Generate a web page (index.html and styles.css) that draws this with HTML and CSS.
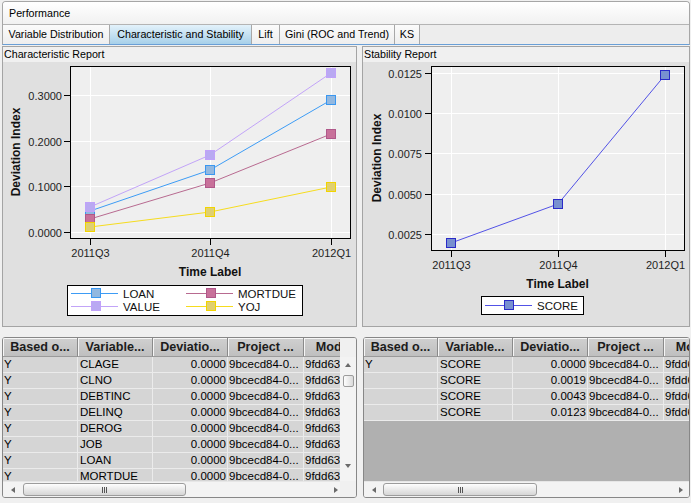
FILE: index.html
```html
<!DOCTYPE html>
<html>
<head>
<meta charset="utf-8">
<link rel="stylesheet" href="styles.css">
</head>
<body>
<div class="head">
  <div class="titlebar">Performance</div>
  <div class="tabs">
    <div class="tab t1">Variable Distribution</div>
    <div class="tab t2 active">Characteristic and Stability</div>
    <div class="tab t3">Lift</div>
    <div class="tab t4">Gini (ROC and Trend)</div>
    <div class="tab t5">KS</div>
  </div>
</div>
<div class="content">
  <div class="charts">
    <div class="panel pl">
      <div class="panel-title">Characteristic Report</div>
      <svg class="chart" width="353" height="264" viewBox="3 62 353 264">
        <rect x="3" y="62" width="353" height="264" fill="#e0e0e0"/>
        <rect x="70.5" y="66.5" width="280" height="172" fill="#efefef"/>
        <g stroke="#ffffff" stroke-width="1">
          <line x1="90.5" y1="67" x2="90.5" y2="238"/>
          <line x1="210.5" y1="67" x2="210.5" y2="238"/>
          <line x1="331.5" y1="67" x2="331.5" y2="238"/>
          <line x1="71" y1="95.5" x2="350" y2="95.5"/>
          <line x1="71" y1="141.5" x2="350" y2="141.5"/>
          <line x1="71" y1="186.5" x2="350" y2="186.5"/>
          <line x1="71" y1="232.5" x2="350" y2="232.5"/>
        </g>
        <rect x="70.5" y="66.5" width="280" height="172" fill="none" stroke="#000"/>
        <g stroke="#000">
          <line x1="64" y1="95.5" x2="70" y2="95.5"/>
          <line x1="64" y1="141.5" x2="70" y2="141.5"/>
          <line x1="64" y1="186.5" x2="70" y2="186.5"/>
          <line x1="64" y1="232.5" x2="70" y2="232.5"/>
          <line x1="90.5" y1="239" x2="90.5" y2="245"/>
          <line x1="210.5" y1="239" x2="210.5" y2="245"/>
          <line x1="331.5" y1="239" x2="331.5" y2="245"/>
        </g>
        <g class="tick" text-anchor="end">
          <text x="62" y="99.5">0.3000</text>
          <text x="62" y="145.5">0.2000</text>
          <text x="62" y="190.5">0.1000</text>
          <text x="62" y="236.5">0.0000</text>
        </g>
        <g class="tick" text-anchor="middle">
          <text x="90.5" y="257">2011Q3</text>
          <text x="210.5" y="257">2011Q4</text>
          <text x="331.5" y="257">2012Q1</text>
        </g>
        <text class="axis" x="210" y="276" text-anchor="middle">Time Label</text>
        <text class="axis" transform="translate(20 152) rotate(-90)" text-anchor="middle">Deviation Index</text>

        <polyline points="90,211 210,170 331,100" fill="none" stroke="#3d9cf5"/>
        <rect x="85.5" y="206.5" width="9" height="9" fill="#92b8e0" stroke="#3a97f0"/>
        <rect x="205.5" y="165.5" width="9" height="9" fill="#92b8e0" stroke="#3a97f0"/>
        <rect x="326.5" y="95.5" width="9" height="9" fill="#92b8e0" stroke="#3a97f0"/>

        <polyline points="90,219 210,183 331,134" fill="none" stroke="#b86a90"/>
        <rect x="85.5" y="214.5" width="9" height="9" fill="#c8719a" stroke="#b0588a"/>
        <rect x="205.5" y="178.5" width="9" height="9" fill="#c8719a" stroke="#b0588a"/>
        <rect x="326.5" y="129.5" width="9" height="9" fill="#c8719a" stroke="#b0588a"/>

        <polyline points="90,207 210,155 331,73" fill="none" stroke="#c2a4f8"/>
        <rect x="85.5" y="202.5" width="9" height="9" fill="#b9a9f2" stroke="#c0a2fa"/>
        <rect x="205.5" y="150.5" width="9" height="9" fill="#b9a9f2" stroke="#c0a2fa"/>
        <rect x="326.5" y="68.5" width="9" height="9" fill="#b9a9f2" stroke="#c0a2fa"/>

        <polyline points="90,227 210,212 331,187" fill="none" stroke="#f6dc1e"/>
        <rect x="85.5" y="222.5" width="9" height="9" fill="#e0d070" stroke="#f2d400"/>
        <rect x="205.5" y="207.5" width="9" height="9" fill="#e0d070" stroke="#f2d400"/>
        <rect x="326.5" y="182.5" width="9" height="9" fill="#e0d070" stroke="#f2d400"/>

        <rect x="67.5" y="285.5" width="235" height="30" fill="#fff" stroke="#000"/>
        <line x1="71" y1="293.5" x2="118" y2="293.5" stroke="#3d9cf5"/>
        <rect x="91.5" y="288.5" width="9" height="9" fill="#92b8e0" stroke="#3a97f0"/>
        <line x1="186" y1="293.5" x2="233" y2="293.5" stroke="#b86a90"/>
        <rect x="206.5" y="288.5" width="9" height="9" fill="#c8719a" stroke="#b0588a"/>
        <line x1="71" y1="306.5" x2="118" y2="306.5" stroke="#c2a4f8"/>
        <rect x="91.5" y="301.5" width="9" height="9" fill="#b9a9f2" stroke="#c0a2fa"/>
        <line x1="186" y1="306.5" x2="233" y2="306.5" stroke="#f6dc1e"/>
        <rect x="206.5" y="301.5" width="9" height="9" fill="#e0d070" stroke="#f2d400"/>
        <g class="leg">
          <text x="123" y="297.5">LOAN</text>
          <text x="238" y="297.5">MORTDUE</text>
          <text x="123" y="310.5">VALUE</text>
          <text x="238" y="310.5">YOJ</text>
        </g>
      </svg>
    </div>
    <div class="panel pr">
      <div class="panel-title">Stability Report</div>
      <svg class="chart" width="326" height="264" viewBox="363 62 326 264">
        <rect x="363" y="62" width="326" height="264" fill="#e0e0e0"/>
        <rect x="431.5" y="66.5" width="253" height="184" fill="#efefef"/>
        <g stroke="#ffffff" stroke-width="1">
          <line x1="451.5" y1="67" x2="451.5" y2="250"/>
          <line x1="558.5" y1="67" x2="558.5" y2="250"/>
          <line x1="665.5" y1="67" x2="665.5" y2="250"/>
          <line x1="432" y1="73.5" x2="684" y2="73.5"/>
          <line x1="432" y1="113.5" x2="684" y2="113.5"/>
          <line x1="432" y1="153.5" x2="684" y2="153.5"/>
          <line x1="432" y1="194.5" x2="684" y2="194.5"/>
          <line x1="432" y1="234.5" x2="684" y2="234.5"/>
        </g>
        <rect x="431.5" y="66.5" width="253" height="184" fill="none" stroke="#000"/>
        <g stroke="#000">
          <line x1="425" y1="73.5" x2="431" y2="73.5"/>
          <line x1="425" y1="113.5" x2="431" y2="113.5"/>
          <line x1="425" y1="153.5" x2="431" y2="153.5"/>
          <line x1="425" y1="194.5" x2="431" y2="194.5"/>
          <line x1="425" y1="234.5" x2="431" y2="234.5"/>
          <line x1="451.5" y1="251" x2="451.5" y2="257"/>
          <line x1="558.5" y1="251" x2="558.5" y2="257"/>
          <line x1="665.5" y1="251" x2="665.5" y2="257"/>
        </g>
        <g class="tick" text-anchor="end">
          <text x="422" y="77.5">0.0125</text>
          <text x="422" y="117.5">0.0100</text>
          <text x="422" y="157.5">0.0075</text>
          <text x="422" y="198.5">0.0050</text>
          <text x="422" y="238.5">0.0025</text>
        </g>
        <g class="tick" text-anchor="middle">
          <text x="451.5" y="269">2011Q3</text>
          <text x="558.5" y="269">2011Q4</text>
          <text x="665.5" y="269">2012Q1</text>
        </g>
        <text class="axis" x="557.5" y="287.5" text-anchor="middle">Time Label</text>
        <text class="axis" transform="translate(381 158) rotate(-90)" text-anchor="middle">Deviation Index</text>

        <polyline points="451,243 558,204 665,75" fill="none" stroke="#5252e6"/>
        <rect x="446.5" y="238.5" width="9" height="9" fill="#7890d0" stroke="#2a2ac8"/>
        <rect x="553.5" y="199.5" width="9" height="9" fill="#7890d0" stroke="#2a2ac8"/>
        <rect x="660.5" y="70.5" width="9" height="9" fill="#7890d0" stroke="#2a2ac8"/>

        <rect x="481.5" y="296.5" width="102" height="18" fill="#fff" stroke="#000"/>
        <line x1="485" y1="305.5" x2="532" y2="305.5" stroke="#5252e6"/>
        <rect x="504.5" y="300.5" width="9" height="9" fill="#7890d0" stroke="#2a2ac8"/>
        <text class="leg" x="537" y="309.5">SCORE</text>
      </svg>
    </div>
  </div>
  <div class="tables">
    <div class="tbl tl">
      <div class="thead">
        <div class="th c1">Based o...</div>
        <div class="th c2">Variable...</div>
        <div class="th c3">Deviatio...</div>
        <div class="th c4">Project ...</div>
        <div class="th c5">Model ...</div>
      </div>
      <div class="corner"></div>
      <div class="viewport">
        <div class="row"><div class="td c1">Y</div><div class="td c2">CLAGE</div><div class="td c3 num">0.0000</div><div class="td c4">9bcecd84-0...</div><div class="td c5">9fdd63b5-2...</div></div>
        <div class="row"><div class="td c1">Y</div><div class="td c2">CLNO</div><div class="td c3 num">0.0000</div><div class="td c4">9bcecd84-0...</div><div class="td c5">9fdd63b5-2...</div></div>
        <div class="row"><div class="td c1">Y</div><div class="td c2">DEBTINC</div><div class="td c3 num">0.0000</div><div class="td c4">9bcecd84-0...</div><div class="td c5">9fdd63b5-2...</div></div>
        <div class="row"><div class="td c1">Y</div><div class="td c2">DELINQ</div><div class="td c3 num">0.0000</div><div class="td c4">9bcecd84-0...</div><div class="td c5">9fdd63b5-2...</div></div>
        <div class="row"><div class="td c1">Y</div><div class="td c2">DEROG</div><div class="td c3 num">0.0000</div><div class="td c4">9bcecd84-0...</div><div class="td c5">9fdd63b5-2...</div></div>
        <div class="row"><div class="td c1">Y</div><div class="td c2">JOB</div><div class="td c3 num">0.0000</div><div class="td c4">9bcecd84-0...</div><div class="td c5">9fdd63b5-2...</div></div>
        <div class="row"><div class="td c1">Y</div><div class="td c2">LOAN</div><div class="td c3 num">0.0000</div><div class="td c4">9bcecd84-0...</div><div class="td c5">9fdd63b5-2...</div></div>
        <div class="row"><div class="td c1">Y</div><div class="td c2">MORTDUE</div><div class="td c3 num">0.0000</div><div class="td c4">9bcecd84-0...</div><div class="td c5">9fdd63b5-2...</div></div>
      </div>
      <div class="vscroll">
        <div class="arrow-box up"><span class="tri-up"></span></div>
        <div class="vthumb"></div>
        <div class="fill"></div>
        <div class="arrow-box down"><span class="tri-down"></span></div>
      </div>
      <div class="hscroll">
        <div class="harrow hl"><span class="tri-left"></span></div>
        <div class="hthumb w-l"><span class="grip"></span></div>
        <div class="fill"></div>
        <div class="harrow hr"><span class="tri-right"></span></div>
      </div>
      <div class="corner"></div>
    </div>
    <div class="tbl tr">
      <div class="thead">
        <div class="th c1">Based o...</div>
        <div class="th c2">Variable...</div>
        <div class="th c3">Deviatio...</div>
        <div class="th c4">Project ...</div>
        <div class="th c5">Model ...</div>
      </div>
      <div class="viewport">
        <div class="row"><div class="td c1">Y</div><div class="td c2">SCORE</div><div class="td c3 num">0.0000</div><div class="td c4">9bcecd84-0...</div><div class="td c5">9fdd63b5-2...</div></div>
        <div class="row"><div class="td c1"></div><div class="td c2">SCORE</div><div class="td c3 num">0.0019</div><div class="td c4">9bcecd84-0...</div><div class="td c5">9fdd63b5-2...</div></div>
        <div class="row"><div class="td c1"></div><div class="td c2">SCORE</div><div class="td c3 num">0.0043</div><div class="td c4">9bcecd84-0...</div><div class="td c5">9fdd63b5-2...</div></div>
        <div class="row"><div class="td c1"></div><div class="td c2">SCORE</div><div class="td c3 num">0.0123</div><div class="td c4">9bcecd84-0...</div><div class="td c5">9fdd63b5-2...</div></div>
      </div>
      <div class="hscroll">
        <div class="harrow hl r"><span class="tri-left"></span></div>
        <div class="hthumb w-r"><span class="grip"></span></div>
        <div class="fill"></div>
        <div class="harrow hr r"><span class="tri-right"></span></div>
      </div>
    </div>
  </div>
</div>
</body>
</html>
```

FILE: styles.css
```css
* { box-sizing: border-box; }
html, body { margin: 0; padding: 0; }
body {
  width: 691px;
  height: 503px;
  overflow: hidden;
  background: #f0f0f0;
  font-family: "Liberation Sans", Arial, sans-serif;
  color: #000;
}

/* header frame */
.head {
  margin: 1px 1px 0 2px;
  border: 1px solid #a6a6a6;
  border-bottom: 1px solid #6a9fd6;
  border-radius: 4px 4px 0 0;
  background: #eeeeee;
}
.titlebar {
  height: 23px;
  line-height: 22px;
  padding-left: 6px;
  font-size: 10.7px;
  background: linear-gradient(#ffffff, #f1f1f1);
  border-bottom: 1px solid #b4b4b4;
  border-radius: 3px 3px 0 0;
}
.tabs {
  display: flex;
  height: 19px;
  background: #ededed;
}
.tab {
  flex: none;
  height: 19px;
  line-height: 18px;
  font-size: 10.7px;
  text-align: center;
  white-space: nowrap;
  background: linear-gradient(#fbfbfb, #eeeeee);
  border-right: 1px solid #a8a8a8;
}
.tab.active { background: linear-gradient(#e3f2fb, #a7d0e9); }
.t1 { width: 107px; }
.t2 { width: 142px; }
.t3 { width: 28px; }
.t4 { width: 115px; }
.t5 { width: 25px; }

/* content */
.content {
  margin: 0 1px 0 2px;
  padding-top: 1px;
}
.charts {
  display: flex;
  gap: 5px;
}
.panel {
  height: 281px;
  border: 1px solid #a4a4a4;
  background: #f0f0f0;
}
.pl { width: 355px; }
.pr { width: 328px; }
.panel-title {
  height: 15px;
  line-height: 14px;
  font-size: 10.7px;
  padding-left: 1px;
  white-space: nowrap;
}
.chart { display: block; }
.tick { font-size: 11px; fill: #1e1e1e; font-family: "Liberation Sans", Arial, sans-serif; }
.axis { font-size: 12px; font-weight: bold; fill: #111; font-family: "Liberation Sans", Arial, sans-serif; }
.leg { font-size: 11.5px; fill: #111; font-family: "Liberation Sans", Arial, sans-serif; }

/* tables */
.tables {
  display: flex;
  gap: 6px;
  margin-top: 10px;
}
.tbl {
  height: 161px;
  border: 1px solid #878787;
  border-radius: 3px;
  background: #f0f0f0;
  display: grid;
  grid-template-rows: 19px 124px 16px;
  overflow: hidden;
}
.tl { width: 355px; grid-template-columns: 337px 16px; }
.tr { width: 327px; grid-template-columns: 325px; }
.thead {
  display: flex;
  overflow: hidden;
  background: #f0f0f0;
}
.th {
  flex: none;
  height: 19px;
  line-height: 18px;
  text-align: center;
  font-size: 12.6px;
  font-weight: bold;
  color: #1c1c1c;
  white-space: nowrap;
  overflow: hidden;
  background: linear-gradient(#d0d0d0, #bfbfbf);
  border-right: 1px solid #8a8a8a;
  border-bottom: 1px solid #9a9a9a;
  box-shadow: inset 1px 1px 0 #f6f6f6;
}
.c1 { width: 75px; }
.c2 { width: 75px; }
.c3 { width: 75px; }
.c4 { width: 76px; }
.c5 { width: 75px; }
.tr .c1 { width: 74px; }
.corner { background: #f0f0f0; }
.viewport {
  background: #b0b0b0;
  overflow: hidden;
}
.row {
  display: flex;
  width: max-content;
  height: 16px;
  background: #d5d5d5;
  border-bottom: 1px solid #ebebeb;
}
.td {
  flex: none;
  height: 15px;
  line-height: 15px;
  font-size: 11.5px;
  white-space: nowrap;
  overflow: hidden;
  padding-left: 1px;
  border-right: 1px solid #ebebeb;
}
.td.c2 { padding-left: 2px; }
.td.num { text-align: right; padding: 0 1px 0 0; }

/* scrollbars */
.vscroll {
  display: flex;
  flex-direction: column;
  background: #f3f3f3;
}
.arrow-box {
  height: 15px;
  display: flex;
  align-items: center;
  justify-content: center;
}
.arrow-box.down { margin-bottom: 8px; }
.vthumb {
  height: 12px;
  margin: 3px 2px 0 3px;
  border: 1px solid #9c9c9c;
  border-radius: 2px;
  background: linear-gradient(90deg, #fdfdfd, #dadada);
}
.fill { flex: 1; }
.tri-up, .tri-down, .tri-left, .tri-right { width: 0; height: 0; display: block; }
.tri-up { border-left: 3px solid transparent; border-right: 3px solid transparent; border-bottom: 4px solid #6a6a6a; }
.tri-down { border-left: 3px solid transparent; border-right: 3px solid transparent; border-top: 4px solid #6a6a6a; }
.tri-left { border-top: 3px solid transparent; border-bottom: 3px solid transparent; border-right: 4px solid #6a6a6a; }
.tri-right { border-top: 3px solid transparent; border-bottom: 3px solid transparent; border-left: 4px solid #6a6a6a; }
.hscroll {
  display: flex;
  background: #f3f3f3;
  border-top: 1px solid #e6e6e6;
}
.harrow {
  display: flex;
  align-items: center;
  justify-content: center;
}
.harrow.hl { width: 20px; }
.harrow.hr { width: 8px; }
.harrow.hl.r { width: 19px; }
.harrow.hr.r { width: 16px; }
.hthumb {
  height: 13px;
  margin-top: 1px;
  border: 1px solid #9c9c9c;
  border-radius: 3px;
  background: linear-gradient(#fdfdfd, #d6d6d6);
  display: flex;
  align-items: center;
  justify-content: center;
}
.w-l { width: 163px; }
.w-r { width: 154px; }
.grip {
  width: 5px;
  height: 6px;
  background: linear-gradient(90deg, #555 1px, transparent 1px);
  background-size: 2px 100%;
}
```
